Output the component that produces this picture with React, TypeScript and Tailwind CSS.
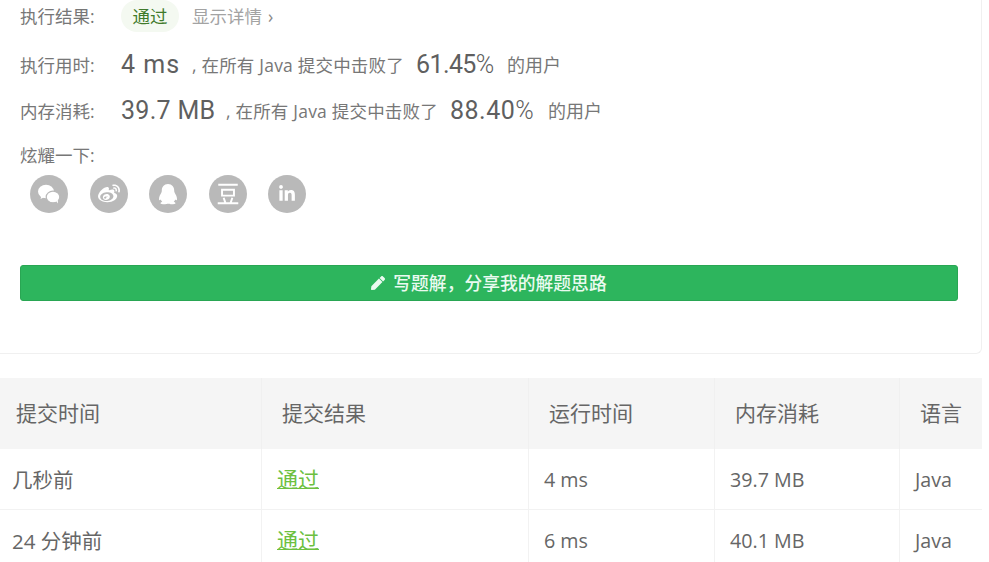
import { FC, ReactNode } from "react";
import { FaLinkedinIn, FaPen, FaWeibo } from "react-icons/fa";

const FONT = "font-['Open_Sans','Noto_Sans_CJK_SC',sans-serif]";
const NUM_FONT = "font-['Roboto',sans-serif]";

const WechatIcon: FC = () => (
  <svg viewBox="0 0 24 24" className="size-[24px]" fill="currentColor">
    <ellipse cx="9" cy="9.5" rx="8" ry="6.8" />
    <path d="M4.5 13.5l-1 3.5 4-2z" />
    <ellipse cx="16" cy="15" rx="6.8" ry="5.8" stroke="#b9b9b9" strokeWidth="1.2" />
    <path d="M19 19l2 2.5-.2-3.5z" />
  </svg>
);

const QqIcon: FC = () => (
  <svg viewBox="0 0 24 24" className="size-[24px]" fill="currentColor">
    <path d="M12 2c4 0 6.2 3 6.2 6.6 0 1 .1 1.700.6 2.500.8 1.300 2.200 3.600 2.200 5.900 0 1.300-.6 1.700-1.700.5-.4.900-.9 1.600-1.600 2.200 1 .4 1.800.9 1.800 1.500 0 .8-2 1-3.800 1-1.300 0-2.500-.2-3-.5h-1.400c-.5.300-1.700.5-3 .5-1.800 0-3.800-.2-3.800-1 0-.6.800-1.100 1.800-1.500-.7-.6-1.200-1.300-1.600-2.200-1.100 1.200-1.700.8-1.700-.5 0-2.300 1.400-4.600 2.200-5.900.5-.8.600-1.500.6-2.500C5.800 5 8 2 12 2z" />
  </svg>
);

const DoubanIcon: FC = () => (
  <svg viewBox="0 0 24 24" className="size-[26px]" fill="none" stroke="currentColor" strokeWidth="1.8">
    <path d="M3 3.500h18M6.500 8h11v5.500h-11zM8 15.500l1.500 4.500M16 15.500L14.500 20M2.500 20.500h19" />
  </svg>
);

const SOCIAL_ICONS: ReactNode[] = [
  <WechatIcon key="wechat" />,
  <FaWeibo key="weibo" className="size-[22px]" />,
  <QqIcon key="qq" />,
  <DoubanIcon key="douban" />,
  <FaLinkedinIn key="linkedin" className="size-[18px]" />,
];

const StatRow: FC<{ label: string; value: string; percent: string; valueClass: string; percentClass: string }> = ({
  label,
  value,
  percent,
  valueClass,
  percentClass,
}) => (
  <div className="flex h-8 items-center text-[17.5px] text-[#777]">
    <span className="w-[101px] shrink-0">{label}</span>
    <span className={`${NUM_FONT} ${valueClass} shrink-0 text-[25px] leading-8 text-[#5f5f5f]`}>{value}</span>
    <span className="w-[212px] shrink-0 tracking-[0.2px] whitespace-nowrap">, 在所有 Java 提交中击败了</span>
    <span className={`${NUM_FONT} ${percentClass} ml-3 text-[25px] leading-8 text-[#5f5f5f]`}>
      {percent}
      <span className="font-light">%</span>
    </span>
    <span className="ml-[14px] text-[18px]">的用户</span>
  </div>
);

const COLUMNS = "grid grid-cols-[261px_267px_186px_185px_83px]";

const HEADERS = ["提交时间", "提交结果", "运行时间", "内存消耗", "语言"];

const ROWS = [
  { time: "几秒前", runtime: "4 ms", memory: "39.7 MB" },
  { time: "24 分钟前", runtime: "6 ms", memory: "40.1 MB" },
];

const App: FC = () => {
  return (
    <div className={`${FONT} h-[562px] w-[989px] overflow-hidden bg-white`}>
      <div className="h-[354px] w-[982px] rounded-br-md border-r border-b border-[#f0f0f0] pl-5 pr-[23px]">
        <div className="flex h-8 items-center text-[17.5px] text-[#777]">
          <span className="w-[101px] shrink-0">执行结果:</span>
          <span className="flex h-8 w-[58px] items-center justify-center rounded-full bg-[#f4f9f1] text-[#3f7a2b]">
            通过
          </span>
          <span className="ml-[13px] text-[#a3a3a3]">显示详情</span>
          <span className="ml-[6px] text-[#888]">›</span>
        </div>

        <div className="mt-[17px] flex flex-col gap-3.5">
          <StatRow label="执行用时:" value="4 ms" percent="61.45" valueClass="w-[71px] tracking-[1px]" percentClass="w-[77px] tracking-[-0.6px]" />
          <StatRow label="内存消耗:" value="39.7 MB" percent="88.40" valueClass="w-[105px] tracking-[0.3px]" percentClass="w-[84px] tracking-[0.5px]" />
        </div>

        <div className="mt-[18px] text-[17.5px] leading-5 text-[#777]">炫耀一下:</div>

        <div className="mt-2.5 ml-2.5 flex gap-[21.5px]">
          {SOCIAL_ICONS.map((icon, i) => (
            <span
              key={i}
              className="flex size-[38px] items-center justify-center rounded-full bg-[#b9b9b9] text-white"
            >
              {icon}
            </span>
          ))}
        </div>

        <button className="mt-[52px] flex h-9 w-[938px] items-center justify-center gap-2 rounded-[3px] border border-[#29a653] bg-[#2db55d] text-[17.8px] font-medium text-[#eafaf0]">
          <FaPen className="size-[14px]" />
          {"写题解\uFF0C分享我的解题思路"}
        </button>
      </div>

      <div className="mt-6 w-[982px]">
        <div className={`${COLUMNS} h-[71px] bg-[#f5f5f5] text-[21px] text-[#666]`}>
          {HEADERS.map((h) => (
            <div key={h} className="flex items-center border-l border-[#f0f0f0] pl-5 first:border-l-0 first:pl-4">
              {h}
            </div>
          ))}
        </div>
        {ROWS.map((row) => (
          <div key={row.time} className={`${COLUMNS} h-[61px] border-b border-[#f2f2f2] text-[19.7px] text-[#666]`}>
            <div className="flex items-center pt-0.5 pl-3 text-[20.5px]">{row.time}</div>
            <div className="flex items-center border-l border-[#f2f2f2] pt-0.5 pl-[15px] text-[21px]">
              <span className="text-[#6cc03f] underline decoration-1 underline-offset-1">通过</span>
            </div>
            <div className="flex items-center border-l border-[#f2f2f2] pt-0.5 pl-[15px]">{row.runtime}</div>
            <div className="flex items-center border-l border-[#f2f2f2] pt-0.5 pl-[15px]">{row.memory}</div>
            <div className="flex items-center border-l border-[#f2f2f2] pt-0.5 pl-[15px]">Java</div>
          </div>
        ))}
      </div>
    </div>
  );
};

export default App;
